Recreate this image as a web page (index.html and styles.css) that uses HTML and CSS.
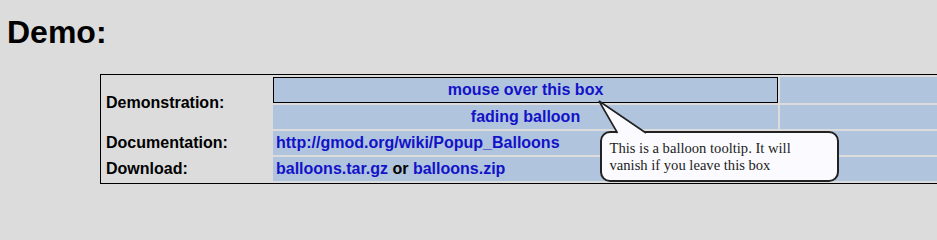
FILE: index.html
```html
<!DOCTYPE html>
<html>
<head>
<meta charset="utf-8">
<title>Popup Balloons Demo</title>
<link rel="stylesheet" href="styles.css">
</head>
<body>
<h1 class="title">Demo:</h1>
<div class="demo">
  <table class="grid">
    <colgroup>
      <col class="c1">
      <col class="c2">
      <col class="c3">
    </colgroup>
    <tr>
      <td class="label" rowspan="2">Demonstration:</td>
      <td class="cell center hover"><a class="link" href="#">mouse over this box</a></td>
      <td class="cell"></td>
    </tr>
    <tr>
      <td class="cell center"><a class="link" href="#">fading balloon</a></td>
      <td class="cell"></td>
    </tr>
    <tr>
      <td class="label">Documentation:</td>
      <td class="cell"><a class="link" href="#">http://gmod.org/wiki/Popup_Balloons</a></td>
      <td class="cell"></td>
    </tr>
    <tr>
      <td class="label">Download:</td>
      <td class="cell"><a class="link" href="#">balloons.tar.gz</a> or <a class="link" href="#">balloons.zip</a></td>
      <td class="cell"></td>
    </tr>
  </table>
  <div class="balloon">This is a balloon tooltip. It will vanish if you leave this box</div>
  <svg class="tail" width="60" height="40" viewBox="0 0 60 40">
    <polygon points="4,3 22.5,35.2 51,35.2" fill="#fbfbff"/>
    <polyline points="22.5,35 4,3 51,35" fill="none" stroke="#222" stroke-width="1.6" stroke-linejoin="miter"/>
  </svg>
</div>
</body>
</html>
```

FILE: styles.css
```css
html {
  overflow: hidden;
}
body {
  margin: 0;
  background: #dcdcdc;
  font-family: "Liberation Sans", Arial, sans-serif;
  color: #000;
}
.title {
  margin: 14px 0 23px 0;
  padding-left: 7px;
  font-size: 32px;
  line-height: 37px;
  font-weight: bold;
}
.demo {
  position: relative;
  margin-left: 100px;
  width: max-content;
}
.grid {
  border: 1px solid #000;
  border-spacing: 2px;
  table-layout: fixed;
  width: 883px;
  font-size: 16px;
  font-weight: bold;
}
.c1 { width: 168px; }
.c2 { width: 505px; }
.c3 { width: 200px; }
.grid td {
  padding: 3px 3px;
  line-height: 18px;
  white-space: nowrap;
  overflow: hidden;
}
.label {
  background: transparent;
  padding-left: 3px;
}
.cell {
  background: #b0c4de;
}
.center {
  text-align: center;
}
.hover {
  border: 1px solid #000;
}
.link {
  color: #1212c8;
  text-decoration: none;
}
.balloon {
  position: absolute;
  left: 500px;
  top: 57px;
  width: 239px;
  height: 51px;
  box-sizing: border-box;
  padding: 6.6px 6px 0 7.5px;
  border: 2px solid #222;
  border-radius: 10px;
  background: #fbfbff;
  font-family: "Liberation Serif", "Times New Roman", serif;
  font-size: 14.6px;
  line-height: 17px;
  font-weight: normal;
  color: #222;
}
.tail {
  position: absolute;
  left: 495px;
  top: 24px;
}
```
